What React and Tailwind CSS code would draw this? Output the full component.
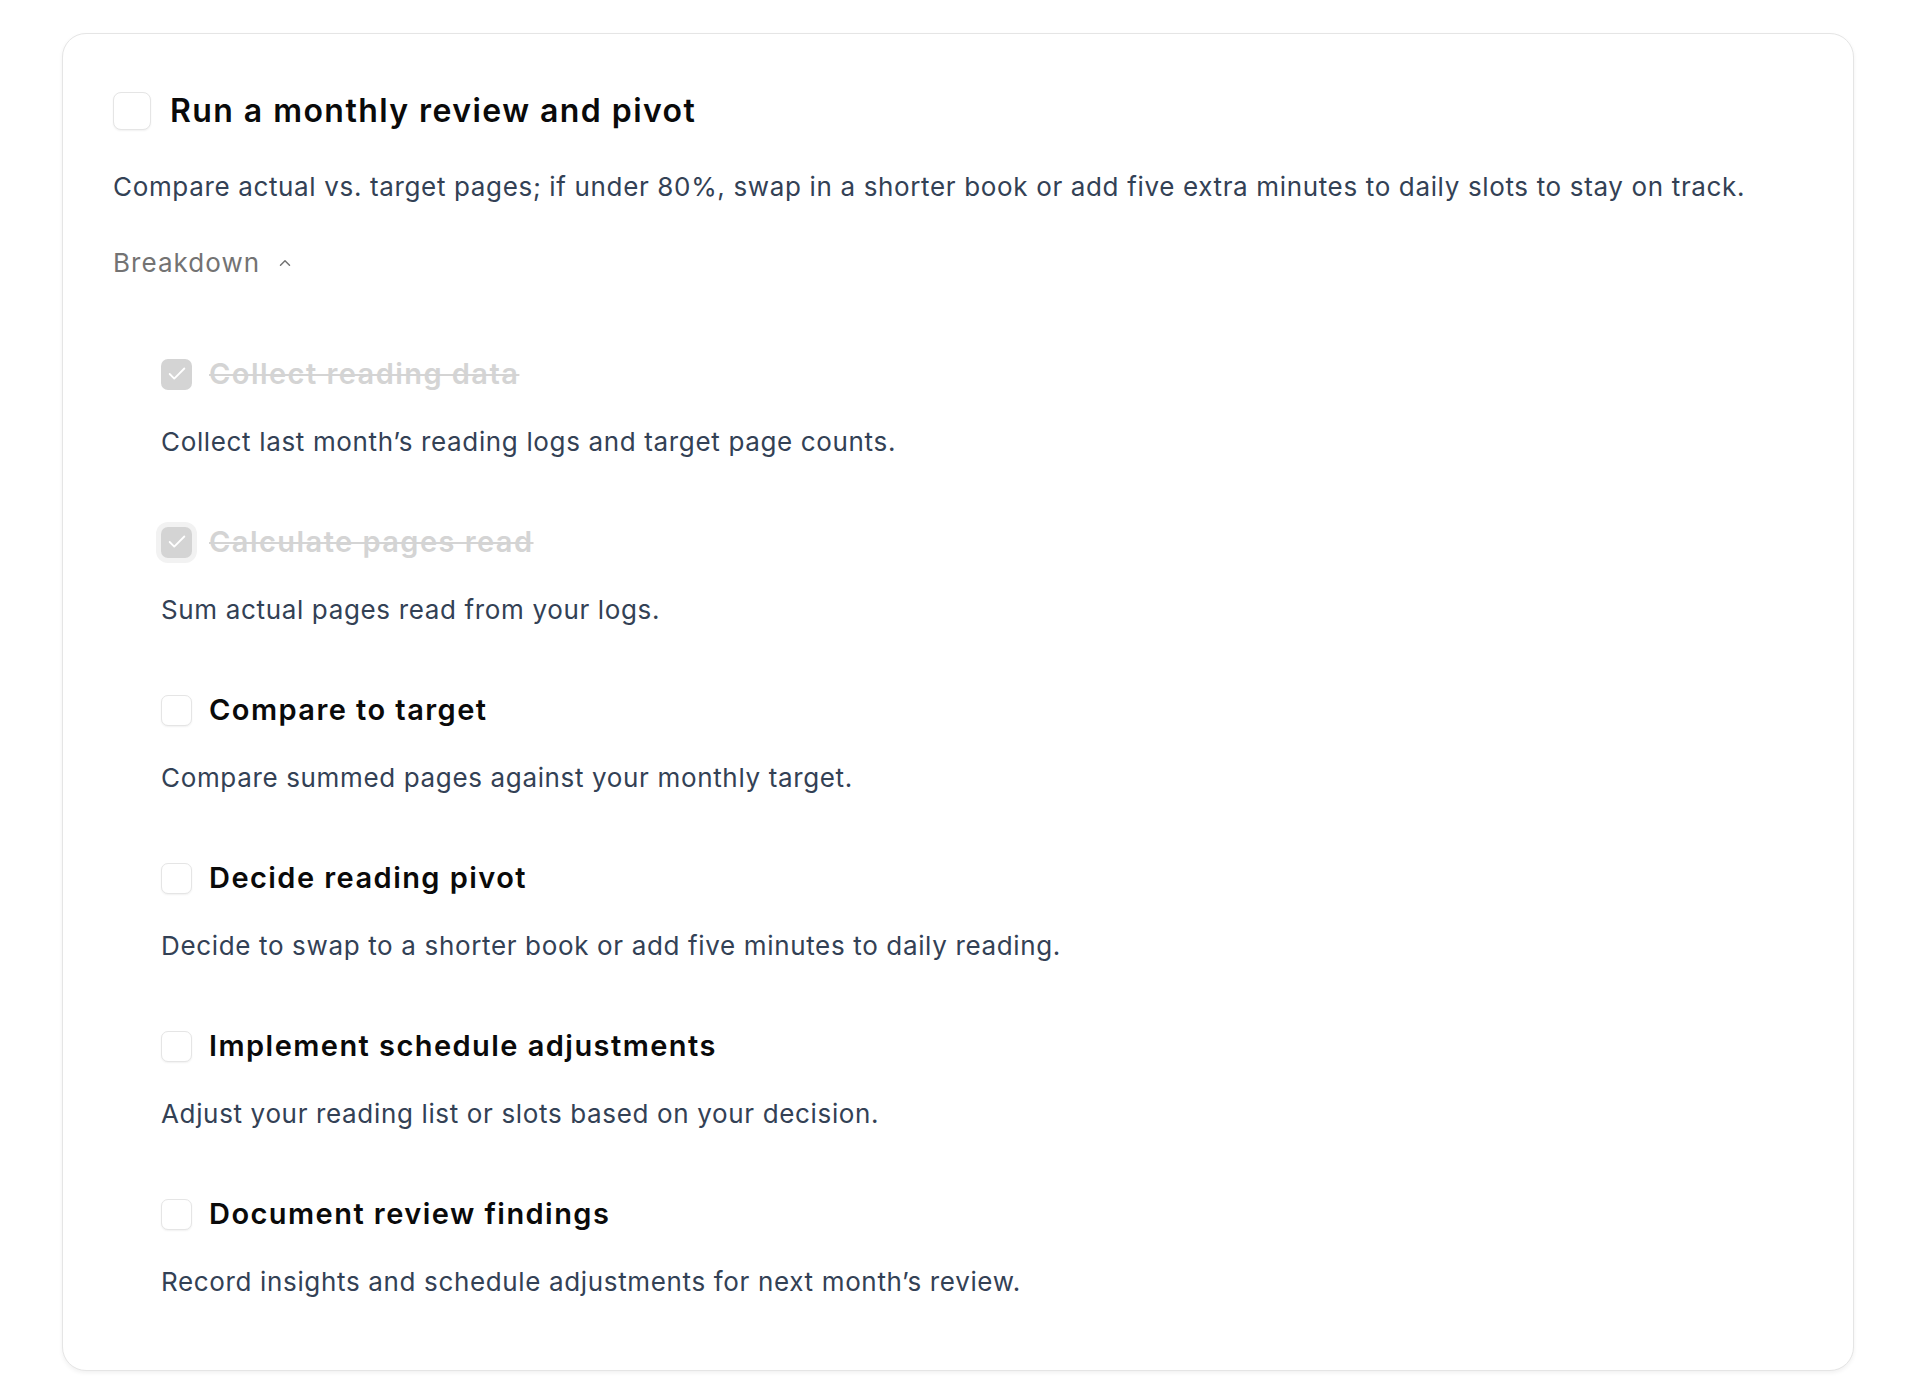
import { Check, ChevronUp } from 'lucide-react';

const steps = [
  { title: 'Collect reading data', desc: 'Collect last month\u2019s reading logs and target page counts.', done: true },
  { title: 'Calculate pages read', desc: 'Sum actual pages read from your logs.', done: true, ring: true },
  { title: 'Compare to target', desc: 'Compare summed pages against your monthly target.' },
  { title: 'Decide reading pivot', desc: 'Decide to swap to a shorter book or add five minutes to daily reading.' },
  { title: 'Implement schedule adjustments', desc: 'Adjust your reading list or slots based on your decision.' },
  { title: 'Document review findings', desc: 'Record insights and schedule adjustments for next month\u2019s review.' },
];

function SubCheck({ done, ring }) {
  if (done) {
    return (
      <span className={`flex h-[31px] w-[31px] shrink-0 items-center justify-center rounded-[7px] bg-[#d4d4d4] ${ring ? 'ring-[5px] ring-[#f2f2f2]' : ''}`}>
        <Check className="h-[22px] w-[22px] text-white" strokeWidth={2} />
      </span>
    );
  }
  return <span className="h-[31px] w-[31px] shrink-0 rounded-[7px] border border-[#e5e5e5] bg-white shadow-[0_1px_2px_rgba(0,0,0,0.06)]" />;
}

export default function App() {
  return (
    <div className="min-h-screen bg-white pl-[62px] pt-[33px] font-['Inter',sans-serif]">
      <div className="w-[1792px] rounded-[24px] border border-[#e5e5e5] bg-white px-[50px] pb-[70px] pt-[57px] shadow-[0_2px_4px_rgba(0,0,0,0.06)]">
        <div className="flex h-[40px] items-center gap-[19px]">
          <span className="h-[38px] w-[38px] shrink-0 rounded-[8px] border border-[#e5e5e5] bg-white shadow-[0_1px_2px_rgba(0,0,0,0.06)]" />
          <h2 className="text-[32px] font-semibold leading-[40px] tracking-[0.045em] text-[#0a0a0a]">Run a monthly review and pivot</h2>
        </div>
        <p className="mt-[38px] text-[26px] leading-[36px] tracking-[0.025em] text-[#334155]">
          Compare actual vs. target pages; if under 80%, swap in a shorter book or add five extra minutes to daily slots to stay on track.
        </p>
        <button className="mt-[40px] flex h-[36px] items-center gap-[16px] text-[26px] leading-[36px] tracking-[0.04em] text-[#737373]">
          Breakdown
          <ChevronUp className="h-[18px] w-[18px]" strokeWidth={2} />
        </button>
        <div className="mt-[75px] flex flex-col gap-[64px] pl-[48px]">
          {steps.map((s) => (
            <div key={s.title}>
              <div className="flex h-[36px] items-center gap-[17px]">
                <SubCheck done={s.done} ring={s.ring} />
                <span className={`text-[29px] font-semibold leading-[36px] tracking-[0.05em] ${s.done ? 'text-[#d4d4d4] line-through decoration-[2px]' : 'text-[#0a0a0a]'}`}>
                  {s.title}
                </span>
              </div>
              <p className="mt-[32px] text-[26px] leading-[36px] tracking-[0.025em] text-[#334155]">{s.desc}</p>
            </div>
          ))}
        </div>
      </div>
    </div>
  );
}
